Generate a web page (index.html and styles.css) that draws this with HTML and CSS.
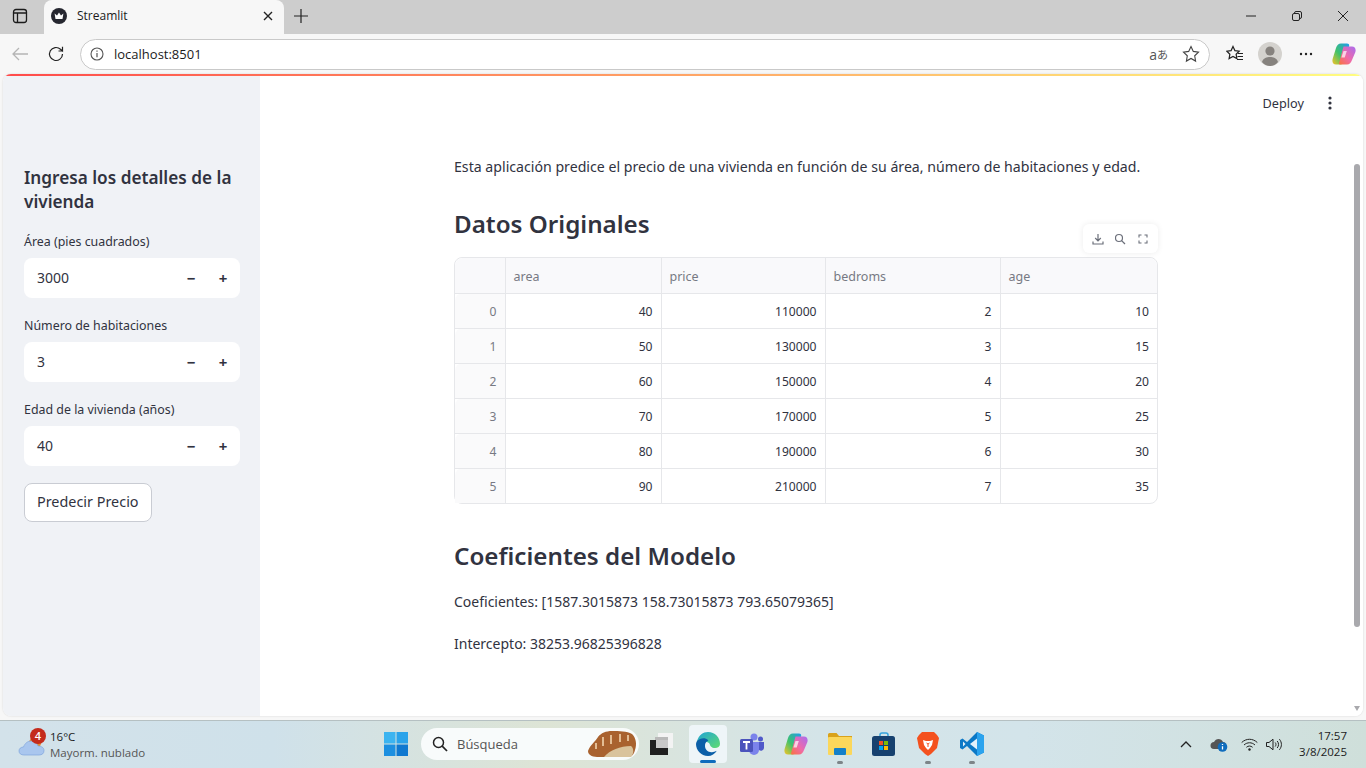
FILE: index.html
```html
<!DOCTYPE html>
<html lang="es">
<head>
    <meta charset="UTF-8">
    <title>Streamlit</title>
    <link rel="stylesheet" href="styles.css">
</head>
<body>

<div class="tabbar">
    <svg class="tab-toggle" width="16" height="16" viewBox="0 0 16 16"><rect x="1.5" y="1.5" width="13" height="13" rx="2.5" fill="none" stroke="#1b1b1b" stroke-width="1.3"/><path d="M1.5 5h13M5.5 5v9.5" fill="none" stroke="#1b1b1b" stroke-width="1.3"/></svg>
    <div class="tab">
        <svg width="16" height="16" viewBox="0 0 16 16"><circle cx="8" cy="8" r="8" fill="#262730"/><path d="M3.6 5.6l2.4 2 2-3 2 3 2.4-2-.9 5.4H4.5z" fill="#fff"/></svg>
        <span class="tab-title">Streamlit</span>
        <svg class="tab-close" width="10" height="10" viewBox="0 0 10 10"><path d="M1 1l8 8M9 1l-8 8" stroke="#222" stroke-width="1.4"/></svg>
    </div>
    <svg class="tab-new" width="14" height="14" viewBox="0 0 14 14"><path d="M7 0v14M0 7h14" stroke="#222" stroke-width="1.2"/></svg>
    <div class="win-buttons">
        <svg width="10" height="10" viewBox="0 0 10 10"><path d="M0 5h10" stroke="#222" stroke-width="1"/></svg>
        <svg width="10" height="10" viewBox="0 0 10 10"><rect x=".5" y="2.5" width="7" height="7" rx="1.5" fill="none" stroke="#222"/><path d="M2.5 2.5V2A1.5 1.5 0 0 1 4 .5h4A1.5 1.5 0 0 1 9.500 2v4A1.500 1.500 0 0 1 8 7.500" fill="none" stroke="#222"/></svg>
        <svg width="10" height="10" viewBox="0 0 10 10"><path d="M0 0l10 10M10 0L0 10" stroke="#222"/></svg>
    </div>
</div>

<div class="toolbar">
    <svg class="nav-back" width="16" height="14" viewBox="0 0 16 14"><path d="M16 7H1M7 1L1 7l6 6" fill="none" stroke="#b5b5b5" stroke-width="1.300"/></svg>
    <svg class="nav-reload" width="18" height="18" viewBox="0 0 18 18"><path d="M15.500 9a6.500 6.500 0 1 1-2-4.700L15.500 6V1.800M15.500 6h-4" fill="none" stroke="#222" stroke-width="1.200"/></svg>
    <div class="address">
        <svg width="14" height="14" viewBox="0 0 14 14"><circle cx="7" cy="7" r="6" fill="none" stroke="#555" stroke-width="1.100"/><path d="M7 6v4.200M7 3.600v1.200" stroke="#555" stroke-width="1.200"/></svg>
        <span class="url">localhost:8501</span>
        <span class="translate">a<span class="translate-jp">あ</span></span>
        <svg width="18" height="18" viewBox="0 0 18 18"><path d="M9 1.500l2.300 4.900 5.200.7-3.800 3.700.9 5.300L9 13.500l-4.600 2.600.9-5.300-3.800-3.700 5.200-.7z" fill="none" stroke="#444" stroke-width="1.100"/></svg>
    </div>
    <svg class="fav" width="18" height="18" viewBox="0 0 18 18"><path d="M7 1.500l1.900 4.100 4.300.6-3.100 3 .8 4.400L7 11.500l-3.900 2.100.8-4.400-3.100-3 4.300-.6z" fill="none" stroke="#222" stroke-width="1.200"/><path d="M12 8.500h5M11.500 11.500h5.500M11 14.500h6" stroke="#222" stroke-width="1.100"/></svg>
    <div class="avatar"><svg width="24" height="24" viewBox="0 0 24 24"><circle cx="12" cy="12" r="12" fill="#d4d2ce"/><circle cx="12" cy="9" r="4.600" fill="#86827e"/><path d="M4 20c1-4 5-5 8-5s7 1 8 5c-2 2.500-5 4-8 4s-6-1.500-8-4z" fill="#86827e"/></svg></div>
    <svg class="more" width="14" height="4" viewBox="0 0 14 4"><circle cx="2" cy="2" r="1.200" fill="#222"/><circle cx="7" cy="2" r="1.200" fill="#222"/><circle cx="12" cy="2" r="1.200" fill="#222"/></svg>
    <svg class="copilot" width="24" height="22" viewBox="0 0 24 22">
        <defs>
            <linearGradient id="cpA" x1="0" y1="1" x2="1" y2="0"><stop offset="0" stop-color="#f7c325"/><stop offset=".45" stop-color="#3fc26b"/><stop offset="1" stop-color="#1f9bf0"/></linearGradient>
            <linearGradient id="cpB" x1="1" y1="0" x2="0" y2="1"><stop offset="0" stop-color="#a86cf0"/><stop offset=".55" stop-color="#f06aa8"/><stop offset="1" stop-color="#f9723c"/></linearGradient>
        </defs>
        <path d="M9 .5h6c2 0 2.500 1.500 2 3L12.500 18c-.7 2-2 3.500-4.500 3.500H4c-3 0-4.200-2.800-3.300-5.700L4 5C4.800 2.300 6.500.5 9 .5z" fill="url(#cpA)"/>
        <path d="M11.500 3.500H20c3 0 4.300 2.800 3.300 5.700L20 17c-.9 2.700-2.500 4.500-5 4.500H8.500c-2 0-1.500-1.500-1-3z" fill="url(#cpB)"/>
        <path d="M11.500 8h3.300l-2.100 6.500H9.400z" fill="#fff" opacity=".7"/>
    </svg>
</div>

<div class="window">
    <div class="rainbow"></div>
    <div class="app">
        <aside class="sidebar">
            <h2 class="side-title">Ingresa los detalles de la vivienda</h2>

            <label class="field-label">Área (pies cuadrados)</label>
            <div class="number-input">
                <span class="number-value">3000</span>
                <span class="step">−</span>
                <span class="step">+</span>
            </div>

            <label class="field-label">Número de habitaciones</label>
            <div class="number-input">
                <span class="number-value">3</span>
                <span class="step">−</span>
                <span class="step">+</span>
            </div>

            <label class="field-label">Edad de la vivienda (años)</label>
            <div class="number-input">
                <span class="number-value">40</span>
                <span class="step">−</span>
                <span class="step">+</span>
            </div>

            <button class="predict">Predecir Precio</button>
        </aside>

        <main class="main">
            <div class="app-header">
                <span class="deploy">Deploy</span>
                <svg width="4" height="14" viewBox="0 0 4 14"><circle cx="2" cy="2" r="1.600" fill="#31333f"/><circle cx="2" cy="7" r="1.600" fill="#31333f"/><circle cx="2" cy="12" r="1.600" fill="#31333f"/></svg>
            </div>
            <div class="content">
                <p class="intro">Esta aplicación predice el precio de una vivienda en función de su área, número de habitaciones y edad.</p>
                <h2 class="heading">Datos Originales</h2>

                <div class="table-wrap">
                    <div class="table-tools">
                        <svg width="12" height="12" viewBox="0 0 12 12"><path d="M6 1v6.500M3.200 5L6 7.800 8.800 5M1 8.500v2.500h10V8.500" fill="none" stroke="#6b6f7a" stroke-width="1.200"/></svg>
                        <svg width="12" height="12" viewBox="0 0 12 12"><circle cx="5" cy="5" r="3.500" fill="none" stroke="#6b6f7a" stroke-width="1.200"/><path d="M7.600 7.600L11 11" stroke="#6b6f7a" stroke-width="1.300"/></svg>
                        <svg width="12" height="12" viewBox="0 0 12 12"><path d="M2 4.500V2h2.500M7.500 2H10v2.500M10 7.500V10H7.500M4.500 10H2V7.500" fill="none" stroke="#6b6f7a" stroke-width="1.100"/></svg>
                    </div>
                    <table class="data">
                        <thead>
                            <tr><th class="col-idx"></th><th class="col-area">area</th><th class="col-price">price</th><th class="col-bed">bedroms</th><th>age</th></tr>
                        </thead>
                        <tbody>
                            <tr><td class="idx">0</td><td>40</td><td>110000</td><td>2</td><td>10</td></tr>
                            <tr><td class="idx">1</td><td>50</td><td>130000</td><td>3</td><td>15</td></tr>
                            <tr><td class="idx">2</td><td>60</td><td>150000</td><td>4</td><td>20</td></tr>
                            <tr><td class="idx">3</td><td>70</td><td>170000</td><td>5</td><td>25</td></tr>
                            <tr><td class="idx">4</td><td>80</td><td>190000</td><td>6</td><td>30</td></tr>
                            <tr><td class="idx">5</td><td>90</td><td>210000</td><td>7</td><td>35</td></tr>
                        </tbody>
                    </table>
                </div>

                <h2 class="heading heading-second">Coeficientes del Modelo</h2>
                <p class="line">Coeficientes: [1587.3015873 158.73015873 793.65079365]</p>
                <p class="line">Intercepto: 38253.96825396828</p>
            </div>
        </main>

        <div class="scrollbar">
            <div class="thumb"></div>
            <div class="arrow-down"></div>
        </div>
    </div>
</div>

<footer class="taskbar">
    <div class="weather">
        <svg class="weather-icon" width="28" height="24" viewBox="0 0 28 24"><ellipse cx="17" cy="10" rx="6" ry="6" fill="#e78a2c"/><path d="M6 22c-3 0-5-1.500-5-4s2-4 4.500-4C7 10 10 8 13 8c3.500 0 6 2 7 5 3 0 6 1.500 6 4.500S24 22 21 22z" fill="#a9c6ee" stroke="#7ea4dc" stroke-width=".7"/></svg>
        <span class="badge">4</span>
        <div class="weather-text">
            <span class="temp">16°C</span>
            <span class="cond">Mayorm. nublado</span>
        </div>
    </div>

    <div class="task-center">
        <svg class="win-logo" width="24" height="24" viewBox="0 0 24 24"><rect width="11.500" height="11.500" fill="#3cb4f0"/><rect x="12.500" width="11.500" height="11.500" fill="#2aa3ea"/><rect y="12.500" width="11.500" height="11.500" fill="#1c8fe0"/><rect x="12.500" y="12.500" width="11.500" height="11.500" fill="#0f78d0"/></svg>
        <div class="search">
            <svg width="16" height="16" viewBox="0 0 16 16"><circle cx="6.500" cy="6.500" r="5" fill="none" stroke="#222" stroke-width="1.500"/><path d="M10.200 10.200L15 15" stroke="#222" stroke-width="1.700"/></svg>
            <span class="search-text">Búsqueda</span>
            <svg class="search-art" width="50" height="28" viewBox="0 0 50 28"><path d="M1 21C3 15 8 12 11 7c3-4 8-6 14-6 7 0 15 0 20 3 4 4 5 10 3 16-1 4-3 7-7 7H12C7 27 1 26 1 21z" fill="#a9622f"/><path d="M17 27c6-7 16-11 27-11 3 2 3 8 0 11z" fill="#d9c39c"/><path d="M9 19v-6M16 16V7M24 14V5M33 12V4M41 11V5" fill="none" stroke="#e3bd94" stroke-width="2"/></svg>
        </div>
        <div class="slot slot-first">
            <svg width="24" height="24" viewBox="0 0 24 24"><rect x="9" y="1" width="15" height="15" fill="#f3f3f3"/><rect x="6" y="5" width="13" height="13" fill="#b9b9b9"/><rect x="1" y="8" width="18" height="15" fill="#1f1f1f"/><rect x="7" y="8" width="12" height="8" fill="#c8c8c8"/></svg>
        </div>
        <div class="slot">
            <div class="task-active">
                <svg width="24" height="24" viewBox="0 0 24 24">
                    <defs><linearGradient id="edgeA" x1="0" y1="0" x2="1" y2="1"><stop offset="0" stop-color="#1fa4d6"/><stop offset="1" stop-color="#5fdc70"/></linearGradient></defs>
                    <path d="M1 9C3 3 7 0 12 0c7 0 12 5 12 12 0 3-3 4.500-6 4-4-.6-4-4-5-5-3-2-8-2-12-2z" fill="url(#edgeA)"/>
                    <path d="M1 9c3-3 8-4 11-1 1 1-3 1-3 6 0 4 4 7 8 6 2-.5 3.500-1 4-1.500C19 22 15.500 24 12 24 5 24 0 18 0 12c0-1 .5-2 1-3z" fill="#0c5fa8"/>
                </svg>
                <span class="active-bar"></span>
            </div>
        </div>
        <div class="slot">
            <svg width="24" height="24" viewBox="0 0 24 24"><circle cx="14" cy="5" r="3.500" fill="#7b83eb"/><circle cx="20.500" cy="7" r="2.500" fill="#5059c9"/><path d="M9 10h10v8a5 5 0 0 1-10 0z" fill="#7b83eb"/><path d="M19 10h5v6a3 3 0 0 1-5 2z" fill="#5059c9"/><rect x="0" y="7" width="13" height="13" rx="1.500" fill="#4b53bc"/><path d="M3 10h7M6.500 10v7.500" stroke="#fff" stroke-width="1.800"/></svg>
        </div>
        <div class="slot">
            <svg width="24" height="22" viewBox="0 0 24 22"><path d="M9 .5h6c2 0 2.500 1.500 2 3L12.500 18c-.7 2-2 3.500-4.500 3.500H4c-3 0-4.200-2.800-3.300-5.700L4 5C4.800 2.300 6.500.5 9 .5z" fill="url(#cpA)"/><path d="M11.500 3.500H20c3 0 4.300 2.800 3.300 5.700L20 17c-.9 2.700-2.500 4.500-5 4.500H8.500c-2 0-1.500-1.500-1-3z" fill="url(#cpB)"/><path d="M11.500 8h3.300l-2.100 6.500H9.400z" fill="#fff" opacity=".7"/></svg>
        </div>
        <div class="slot">
            <svg width="24" height="22" viewBox="0 0 24 22"><path d="M0 1.500A1.500 1.500 0 0 1 1.500 0h7L11 3h13v3H0z" fill="#d9a21b"/><rect y="4" width="24" height="18" rx="1" fill="#fbd75b"/><rect x="6" y="15" width="12" height="7" rx="1" fill="#1480c8"/></svg>
            <span class="open-dot"></span>
        </div>
        <div class="slot">
            <svg width="24" height="24" viewBox="0 0 24 24"><path d="M8 5V3a2 2 0 0 1 2-2h4a2 2 0 0 1 2 2v2" fill="none" stroke="#36a3dc" stroke-width="1.500"/><rect y="4" width="23" height="20" rx="2.500" fill="#17416f"/><rect x="7" y="9" width="4" height="4" fill="#f25022"/><rect x="12" y="9" width="4" height="4" fill="#7fba00"/><rect x="7" y="14" width="4" height="4" fill="#00a4ef"/><rect x="12" y="14" width="4" height="4" fill="#ffb900"/></svg>
        </div>
        <div class="slot">
            <svg width="22" height="24" viewBox="0 0 22 24"><path d="M5 0h12l3 3 2 3-2 10-6 6-3 2-3-2-6-6L0 6l2-3z" fill="#f4511e"/><path d="M6 8l3 1h4l3-1-1 5-2 3-2 2-2-2-2-3z" fill="#fff"/><path d="M9.500 11l1.500 1 1.500-1M11 12v3" stroke="#f4511e" fill="none"/></svg>
            <span class="open-dot"></span>
        </div>
        <div class="slot">
            <svg width="24" height="24" viewBox="0 0 24 24"><path d="M17 0l7 3.500v17L17 24 7 14l-4.500 3.500L0 16V8l2.500-1.500L7 10z" fill="#0b78c6"/><path d="M17 0l7 3.500v17L17 24z" fill="#2ba3ee"/><path d="M17 6.500L10 12l7 5.500z" fill="#e3f1fb"/><path d="M3 9.500L5.500 12 3 14.500z" fill="#e3f1fb"/></svg>
            <span class="open-dot"></span>
        </div>
    </div>

    <div class="tray">
        <svg width="12" height="7" viewBox="0 0 12 7"><path d="M1 6l5-5 5 5" fill="none" stroke="#222" stroke-width="1.300"/></svg>
        <svg class="tray-cloud" width="18" height="14" viewBox="0 0 18 14"><path d="M4 11C1.500 11 .5 9.500.5 7.500S2 4 4 4c1-2 2.500-3 4.500-3S12 2 13 4c2 0 3 1 3 3v4z" fill="#555"/><circle cx="12.500" cy="9" r="4.800" fill="#0f6cbd"/><path d="M12.500 8.200v3.400M12.500 6v1" stroke="#fff" stroke-width="1.300"/></svg>
        <svg class="tray-wifi" width="17" height="13" viewBox="0 0 17 13"><path d="M.7 4.500c4.500-4.300 11-4.300 15.600 0M3 7c3.200-3 7.800-3 11 0M5.400 9.300c2-1.700 4.200-1.700 6.200 0" fill="none" stroke="#222" stroke-width="1"/><circle cx="8.500" cy="11.500" r="1.200" fill="#222"/></svg>
        <svg class="tray-vol" width="17" height="13" viewBox="0 0 17 13"><path d="M.5 4.500h2.500L7 1.200v10.600L3 8.500H.5z" fill="none" stroke="#222"/><path d="M9.200 4.500c1 1.300 1 2.700 0 4M11.200 3c1.800 2.200 1.800 4.800 0 7M13.400 1.200c2.700 3.300 2.700 7.300 0 10.600" fill="none" stroke="#222"/></svg>
        <div class="clock">
            <span>17:57</span>
            <span>3/8/2025</span>
        </div>
    </div>
</footer>

</body>
</html>
```

FILE: styles.css
```css
* {
    box-sizing: border-box;
}
html, body {
    margin: 0;
    height: 768px;
    overflow: hidden;
}
body {
    font-family: "Noto Sans", sans-serif;
    background-color: #f7f7f7;
    color: #31333f;
    display: flex;
    flex-direction: column;
}

/* browser chrome */
.tabbar {
    height: 34px;
    padding-bottom: 2px;
    background-color: #cdcdcd;
    display: flex;
    align-items: center;
    flex-shrink: 0;
}
.tab-toggle {
    margin-left: 12px;
}
.tab {
    width: 240px;
    height: 34px;
    margin: 2px 0 0 16px;
    padding: 0 11px 3px 7px;
    background-color: #f7f7f7;
    border-radius: 8px 8px 0 0;
    display: flex;
    align-items: center;
    flex-shrink: 0;
}
.tab-title {
    font-family: "Open Sans", sans-serif;
    font-size: 12px;
    color: #1b1b1b;
    margin-left: 10px;
    flex: 1;
}
.tab-new {
    margin-left: 10px;
}
.win-buttons {
    margin-left: auto;
    display: flex;
    gap: 36px;
    padding-right: 18px;
}
.toolbar {
    height: 40px;
    display: flex;
    align-items: center;
    flex-shrink: 0;
}
.nav-back {
    margin-left: 12px;
}
.nav-reload {
    margin-left: 19px;
}
.address {
    width: 1130px;
    height: 31px;
    margin-left: 15px;
    padding: 0 9px 0 9px;
    background-color: #fff;
    border: 1px solid #c9c9c9;
    border-radius: 16px;
    display: flex;
    align-items: center;
}
.url {
    font-family: "Open Sans", sans-serif;
    font-size: 13px;
    color: #1b1b1b;
    margin-left: 10px;
    flex: 1;
}
.translate {
    font-family: "Open Sans", sans-serif;
    font-size: 14px;
    color: #555;
    margin-right: 14px;
    display: flex;
    align-items: center;
}
.translate-jp {
    font-family: "Noto Sans CJK JP", sans-serif;
    font-size: 11px;
    line-height: 18px;
}
.fav {
    margin-left: 16px;
}
.avatar {
    margin-left: 14px;
    height: 24px;
}
.more {
    margin-left: 17px;
}
.copilot {
    margin-left: 19px;
}

/* streamlit window */
.window {
    height: 642px;
    margin: 0 3px;
    border-radius: 8px;
    overflow: hidden;
    background-color: #fff;
    box-shadow: 0 0 2px rgba(0, 0, 0, 0.15);
    position: relative;
    flex-shrink: 0;
}
.rainbow {
    position: absolute;
    top: 0;
    left: 0;
    right: 0;
    height: 2px;
    background-image: linear-gradient(90deg, #ff4b4b, #fffd80);
    z-index: 2;
}
.app {
    display: flex;
    height: 100%;
    position: relative;
}
.sidebar {
    width: 257px;
    flex-shrink: 0;
    background-color: #f0f2f6;
    padding: 92px 20px 0 21px;
}
.side-title {
    font-size: 17.2px;
    line-height: 24px;
    font-weight: 600;
    margin: 0 0 18px;
}
.field-label {
    display: block;
    padding-top: 1px;
    font-size: 12.4px;
    line-height: 18px;
    margin-bottom: 7px;
}
.number-input {
    height: 40px;
    margin-bottom: 18px;
    padding-left: 13px;
    padding-right: 1px;
    background-color: #fff;
    border-radius: 8px;
    display: flex;
    align-items: center;
}
.number-value {
    padding-bottom: 2px;
    font-size: 14px;
    flex: 1;
}
.step {
    width: 32px;
    text-align: center;
    font-size: 15px;
    font-weight: 700;
}
.predict {
    display: block;
    height: 39px;
    margin-top: -1px;
    padding: 0 12px 2px;
    font-family: inherit;
    font-size: 14.4px;
    color: #31333f;
    background-color: #fff;
    border: 1px solid #c9ccd3;
    border-radius: 8px;
}
.main {
    flex: 1;
    min-width: 0;
    background-color: #fff;
}
.app-header {
    height: 58px;
    padding-right: 31px;
    display: flex;
    align-items: center;
    justify-content: flex-end;
    gap: 24px;
}
.deploy {
    font-size: 12.7px;
}
.content {
    width: 704px;
    margin-left: 194px;
    padding-top: 23px;
}
.intro {
    margin: 0;
    font-size: 14.15px;
    line-height: 24px;
}
.heading {
    font-size: 24.2px;
    line-height: 36px;
    font-weight: 600;
    margin: 27px 0 0;
}
.heading-second {
    margin-top: 34px;
}
.table-wrap {
    position: relative;
    margin-top: 15px;
    border: 1px solid #e6e7ea;
    border-radius: 8px;
}
.table-tools {
    position: absolute;
    top: -34px;
    right: -1px;
    width: 75px;
    height: 29px;
    padding-right: 1px;
    background-color: #fff;
    border-radius: 6px;
    box-shadow: 0 0 6px rgba(0, 0, 0, 0.08);
    display: flex;
    align-items: center;
    justify-content: center;
    gap: 10.5px;
}
.data {
    width: 100%;
    table-layout: fixed;
    border-collapse: collapse;
    font-size: 12.1px;
}
.data th {
    height: 35px;
    padding: 2px 8px 0;
    background-color: #f9f9fb;
    border-bottom: 1px solid #e6e7ea;
    border-left: 1px solid #e6e7ea;
    color: #777983;
    font-size: 12.5px;
    font-weight: 400;
    text-align: left;
}
.data td {
    height: 35px;
    padding: 1px 8px 0;
    border-top: 1px solid #e6e7ea;
    border-left: 1px solid #e6e7ea;
    text-align: right;
}
.data th:first-child, .data td:first-child {
    border-left: none;
    border-top-left-radius: 8px;
}
.data th:last-child {
    border-top-right-radius: 8px;
}
.data td.idx {
    background-color: #fafafb;
    color: #777983;
}
.col-idx {
    width: 50px;
}
.col-area {
    width: 156px;
}
.col-price {
    width: 164px;
}
.col-bed {
    width: 175px;
}
.line {
    margin: 18px 0 0;
    font-size: 14px;
    line-height: 24px;
}
.heading-second + .line {
    margin-top: 16px;
}
.scrollbar {
    position: absolute;
    top: 0;
    right: 0;
    bottom: 0;
    width: 10px;
}
.thumb {
    margin: 90px 0 0 1px;
    width: 6px;
    height: 463px;
    border-radius: 3px;
    background-color: #a9a9ad;
}
.arrow-down {
    position: absolute;
    left: 1px;
    bottom: 5px;
    width: 0;
    height: 0;
    border-left: 3px solid transparent;
    border-right: 3px solid transparent;
    border-top: 5px solid #a9a9ad;
}

/* windows taskbar */
.taskbar {
    position: relative;
    height: 48px;
    margin-top: 4px;
    flex-shrink: 0;
    border-top: 1px solid #b5c0c2;
    background-image: linear-gradient(90deg, #d3e2ea 0%, #cfe1ea 20%, #dde4d5 40%, #d4e4e8 60%, #d3e4ea 75%, #cfdfda 100%);
    display: flex;
    align-items: center;
    font-family: "Open Sans", sans-serif;
}
.weather {
    width: 160px;
    padding-left: 18px;
    position: relative;
    display: flex;
    align-items: center;
}
.badge {
    position: absolute;
    left: 30px;
    top: -1px;
    width: 16px;
    height: 16px;
    border-radius: 50%;
    background-color: #c42b1c;
    color: #fff;
    font-size: 11px;
    font-weight: 600;
    line-height: 16px;
    text-align: center;
}
.weather-text {
    margin-left: 4px;
    display: flex;
    flex-direction: column;
    font-size: 11.5px;
    line-height: 16px;
    color: #1b1b1b;
}
.cond {
    color: #555;
}
.task-center {
    position: absolute;
    left: 384px;
    top: 0;
    height: 46px;
    display: flex;
    align-items: center;
}
.search {
    width: 218px;
    height: 32px;
    margin-left: 13px;
    padding: 0 2px 0 11px;
    background-color: #f8fbfb;
    border-radius: 16px;
    display: flex;
    align-items: center;
}
.search-text {
    font-size: 13px;
    color: #555;
    margin-left: 9px;
    flex: 1;
}
.slot {
    position: relative;
    width: 44px;
    height: 46px;
    display: flex;
    align-items: center;
    justify-content: center;
}
.slot-first {
    width: 47px;
    padding-right: 3px;
}
.task-active {
    position: relative;
    width: 38px;
    height: 38px;
    background-color: #eef5f8;
    border-radius: 4px;
    display: flex;
    align-items: center;
    justify-content: center;
}
.active-bar {
    position: absolute;
    left: 11px;
    bottom: 0;
    width: 16px;
    height: 3px;
    border-radius: 2px;
    background-color: #0f6cbd;
}
.open-dot {
    position: absolute;
    left: 50%;
    margin-left: -3px;
    bottom: 3px;
    width: 6px;
    height: 3px;
    border-radius: 2px;
    background-color: #7d8488;
}
.tray {
    margin-left: auto;
    padding-right: 19px;
    display: flex;
    align-items: center;
}
.tray-cloud {
    margin-left: 18px;
}
.tray-wifi {
    margin-left: 13px;
}
.tray-vol {
    margin-left: 8px;
}
.clock {
    margin-left: 16px;
    display: flex;
    flex-direction: column;
    align-items: flex-end;
    font-size: 11.5px;
    line-height: 16px;
    color: #1b1b1b;
    margin-top: -2px;
}
```
